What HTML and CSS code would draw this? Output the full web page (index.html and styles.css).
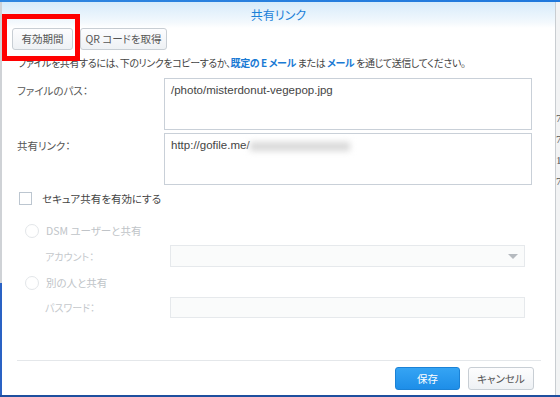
FILE: index.html
```html
<!DOCTYPE html>
<html lang="ja">
<head>
<meta charset="utf-8">
<title>共有リンク</title>
<link rel="stylesheet" href="styles.css">
</head>
<body>
<div class="screen">
  <div class="topline"></div>
  <div class="main">
    <div class="leftedge"></div>
    <div class="dialog">
      <div class="titlebar">共有リンク</div>
      <div class="tabs">
        <button class="btn tab1">有効期間</button>
        <button class="btn tab2">QR コードを取得</button>
      </div>
      <p class="desc">ファイルを共有するには、下のリンクをコピーするか、<span class="link">既定の E メール</span> または <span class="link">メール</span> を通じて送信してください。</p>
      <div class="row">
        <div class="label">ファイルのパス：</div>
        <div class="field">/photo/misterdonut-vegepop.jpg</div>
      </div>
      <div class="row row2">
        <div class="label">共有リンク：</div>
        <div class="field">http://gofile.me/<span class="blur"></span></div>
      </div>
      <div class="check">
        <span class="box"></span>
        <span>セキュア共有を有効にする</span>
      </div>
      <div class="radio r1">
        <span class="circle"></span>
        <span>DSM ユーザーと共有</span>
      </div>
      <div class="sub s1">
        <span class="sublabel">アカウント：</span>
        <span class="input select"><span class="caret"></span></span>
      </div>
      <div class="radio r2">
        <span class="circle"></span>
        <span>別の人と共有</span>
      </div>
      <div class="sub s2">
        <span class="sublabel">パスワード：</span>
        <span class="input pw"></span>
      </div>
      <div class="spacer"></div>
      <div class="sep"></div>
      <div class="footer">
        <button class="btn primary">保存</button>
        <button class="btn cancel">キャンセル</button>
      </div>
    </div>
    <div class="rightedge">
      <span class="d d1">7</span>
      <span class="d d2">7</span>
      <span class="d d3">1</span>
      <span class="d d4">7</span>
    </div>
  </div>
  <div class="bottomline"></div>
</div>
<div class="annot"></div>
</body>
</html>
```
FILE: styles.css
```css
* { box-sizing: border-box; }
html, body { margin: 0; padding: 0; }
body {
  width: 560px;
  height: 397px;
  overflow: hidden;
  background: #2a64c4;
  font-family: "Noto Sans CJK JP", "Liberation Sans", sans-serif;
  font-feature-settings: "palt";
  position: relative;
}
.screen { display: flex; flex-direction: column; height: 397px; }
.topline { height: 2px; background: linear-gradient(90deg, #2f86e0, #1f78dc); }
.main { display: flex; height: 393px; }
.leftedge {
  width: 2px;
  background: linear-gradient(#cfd2d6 0, #cfd2d6 281px, #2a62c4 281px);
}
.dialog {
  width: 553px;
  background: #fff;
  display: flex;
  flex-direction: column;
}
.rightedge {
  width: 5px;
  background: #f2f3f4;
  border-left: 1px solid #c9cdd1;
  position: relative;
}
.d {
  position: absolute;
  left: 0;
  font-family: "Liberation Serif", serif;
  font-size: 11px;
  color: #555;
  line-height: 12px;
}
.d1 { top: 110px; }
.d2 { top: 131px; }
.d3 { top: 152px; }
.d4 { top: 173px; }
.bottomline { height: 2px; background: #1f4f9e; }

.titlebar {
  height: 26px;
  line-height: 26px;
  text-align: center;
  font-size: 12px;
  color: #1a80d8;
  background: linear-gradient(#d6ebfa, #f4f9fd 80%, #ffffff);
}
.tabs { display: flex; gap: 7px; padding-left: 10px; }
.btn {
  font-family: inherit;
  font-feature-settings: "palt";
  height: 22px;
  border: 1px solid #c8ced4;
  border-radius: 3px;
  background: linear-gradient(#fdfdfe, #eef1f4);
  font-size: 10.5px;
  color: #555;
  padding: 0;
  line-height: 20px;
}
.tab1 { width: 61px; }
.tab2 { width: 87px; }
.desc {
  margin: 6px 0 0 16px;
  font-size: 10px;
  letter-spacing: -0.4px;
  line-height: 14px;
  color: #444;
  white-space: nowrap;
}
.link { color: #1a7ad4; font-weight: bold; }
.row { display: flex; margin-top: 8px; }
.row2 { margin-top: 3px; }
.label {
  width: 162px;
  padding: 5px 0 0 15px;
  font-size: 10.5px;
  color: #555;
}
.field {
  width: 368px;
  height: 52px;
  border: 1px solid #c9d0d8;
  padding: 5px 6px;
  font-family: "Liberation Sans", sans-serif;
  font-size: 11.5px;
  color: #444;
  display: flex;
  align-items: flex-start;
}
.blur {
  display: inline-block;
  width: 100px;
  height: 9px;
  margin-top: 3px;
  background: #d8d8d8;
  filter: blur(3px);
}
.check {
  display: flex;
  align-items: center;
  margin: 6px 0 0 17px;
  font-size: 10.5px;
  color: #444;
  gap: 10px;
}
.box {
  width: 13px;
  height: 13px;
  border: 1px solid #bcc6d0;
  background: #fff;
}
.radio {
  display: flex;
  align-items: center;
  margin-left: 23px;
  gap: 7px;
  font-size: 10.5px;
  color: #c0c4c8;
}
.r1 { margin-top: 17px; }
.r2 { margin-top: 8px; }
.circle {
  width: 14px;
  height: 14px;
  border-radius: 50%;
  border: 1px solid #e3e6e9;
}
.sub { display: flex; align-items: center; margin-left: 43px; }
.s1 { margin-top: 7px; }
.s2 { margin-top: 7px; }
.sublabel {
  width: 125px;
  font-size: 10px;
  color: #c4c8cc;
}
.input {
  width: 355px;
  height: 22px;
  border: 1px solid #e6e9ec;
  background: #fafbfb;
  position: relative;
}
.pw { height: 21px; }
.caret {
  position: absolute;
  right: 6px;
  top: 8px;
  border-left: 5px solid transparent;
  border-right: 5px solid transparent;
  border-top: 5px solid #b5babf;
}
.spacer { flex: 1; }
.sep { height: 1px; background: #e4e7ea; margin: 0 14px 0 15px; }
.footer {
  display: flex;
  justify-content: flex-end;
  gap: 8px;
  padding: 6px 21px 5px 0;
}
.footer .btn { height: 23px; }
.primary {
  width: 65px;
  background: linear-gradient(#35a4f4, #1e8ee8);
  border-color: #1b82d6;
  color: #fff;
}
.cancel { width: 66px; }
.annot {
  position: absolute;
  left: 2px;
  top: 14px;
  width: 78px;
  height: 47px;
  border: 5px solid #ff0000;
}
```
